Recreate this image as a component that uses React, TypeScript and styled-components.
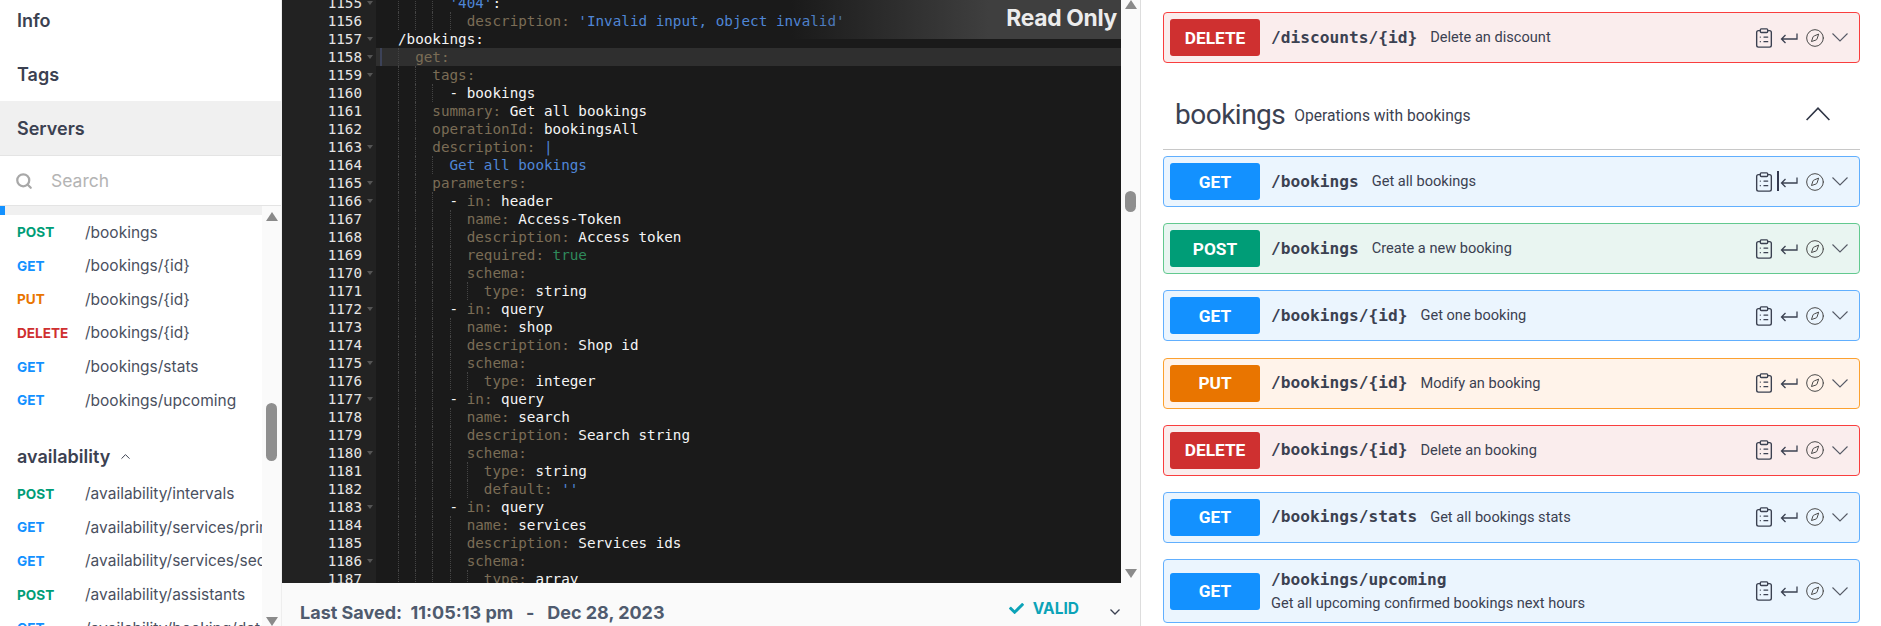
import React from 'react'
import styled, { createGlobalStyle } from 'styled-components'
import { ChevronUp, ClipboardList, Compass, Search } from 'lucide-react'
import { FaCheck } from 'react-icons/fa'

type Method = 'GET' | 'POST' | 'PUT' | 'DELETE'

const methodColors: Record<Method, { main: string; bg: string; border: string }> = {
	GET: { main: '#1391ff', bg: '#ebf5fe', border: '#61affe' },
	POST: { main: '#009d77', bg: '#e9f5f1', border: '#62c98f' },
	PUT: { main: '#e97500', bg: '#fff3ea', border: '#fca130' },
	DELETE: { main: '#cf3030', bg: '#faeded', border: '#f93e3e' },
}

const GlobalStyle = createGlobalStyle`
	html, body {
		margin: 0;
		padding: 0;
		background: #fff;
	}
	* {
		box-sizing: border-box;
	}
`

const Page = styled.div`
	display: flex;
	width: 1881px;
	height: 626px;
	overflow: hidden;
	font-family: Inter, 'Noto Sans', sans-serif;
`

/* sidebar */
const Sidebar = styled.aside`
	display: flex;
	flex-direction: column;
	flex: 0 0 282px;
	height: 626px;
	overflow: hidden;
	border-right: 1px solid #eee;
`

const NavItem = styled.div<{ $active?: boolean; $first?: boolean }>`
	flex: 0 0 54px;
	display: flex;
	align-items: center;
	padding: 1px 0 0 17px;
	margin-top: ${({ $first }) => ($first ? '-7px' : '0')};
	font-size: 18px;
	font-weight: 600;
	color: #3b4151;
	background: ${({ $active }) => ($active ? '#f0f0f0' : '#fff')};
`

const SearchBar = styled.div`
	flex: 0 0 51px;
	display: flex;
	align-items: center;
	gap: 18px;
	padding-left: 15px;
	border-top: 1px solid #e4e4e4;
	border-bottom: 1px solid #e4e4e4;
	font-size: 17.5px;
	color: #b4b4b4;
`

const SidebarBody = styled.div`
	flex: 1;
	display: flex;
	min-height: 0;
`

const NavList = styled.div`
	width: 262px;
	overflow: hidden;
`

const ActiveStrip = styled.div`
	height: 9.4px;
	background: #f0f0f0;
	border-left: 5px solid #1391ff;
`

const EndpointRow = styled.div`
	display: flex;
	align-items: center;
	height: 33.6px;
	padding-left: 17px;
	white-space: nowrap;
`

const MethodTag = styled.span<{ $method: Method }>`
	flex: 0 0 68px;
	font-size: 13.6px;
	font-weight: 700;
	color: ${({ $method }) => methodColors[$method].main};
`

const EndpointPath = styled.span`
	font-size: 15.5px;
	color: #4a5060;
`

const GroupTitle = styled.div`
	display: flex;
	align-items: center;
	gap: 8px;
	height: 40px;
	margin-top: 20px;
	padding-left: 17px;
	font-size: 18px;
	font-weight: 600;
	color: #3b4151;
`

const ScrollTrack = styled.div<{ $top: number; $bottom: number }>`
	flex: 0 0 19px;
	display: flex;
	flex-direction: column;
	align-items: center;
	padding: ${({ $top }) => $top}px 0 ${({ $bottom }) => $bottom}px;
	background: #fafafa;
`

const ScrollArrow = styled.div<{ $down?: boolean }>`
	width: 0;
	height: 0;
	border-left: 6.5px solid transparent;
	border-right: 6.5px solid transparent;
	${({ $down }) =>
		$down ? 'border-top: 9px solid #8a8a8a;' : 'border-bottom: 9px solid #8a8a8a;'}
`

const ScrollThumb = styled.div<{ $top: number; $height: number }>`
	width: 11px;
	height: ${({ $height }) => $height}px;
	margin-top: ${({ $top }) => $top}px;
	margin-bottom: auto;
	border-radius: 6px;
	background: #8f8f8f;
`

/* editor */
const EditorColumn = styled.section`
	flex: 0 0 859px;
	display: flex;
	flex-direction: column;
	border-right: 1px solid #ddd;
`

const EditorBody = styled.div`
	flex: 0 0 583px;
	display: flex;
	min-height: 0;
`

const CodePane = styled.div`
	position: relative;
	flex: 1;
	overflow: hidden;
	background: #1a1a1a;
`

const CodeScroll = styled.div`
	margin-top: -6px;
	font-family: 'DejaVu Sans Mono', 'Liberation Mono', monospace;
	font-size: 14.28px;
	line-height: 18px;
`

const CodeLine = styled.div<{ $active?: boolean }>`
	display: flex;
	height: 18px;
	white-space: pre;
	background: linear-gradient(
		to right,
		#222 94px,
		${({ $active }) => ($active ? '#2f2f2f' : '#1a1a1a')} 94px
	);
`

const Gutter = styled.div`
	flex: 0 0 94px;
	display: flex;
	align-items: center;
	justify-content: flex-end;
	padding-right: 3px;
	color: #e6e6e6;
`

const FoldMark = styled.span<{ $show: boolean }>`
	width: 0;
	height: 0;
	margin-left: 5px;
	border-left: 3.5px solid transparent;
	border-right: 3.5px solid transparent;
	border-top: 4px solid ${({ $show }) => ($show ? '#555' : 'transparent')};
`

const LineMark = styled.span<{ $active?: boolean }>`
	flex: 0 0 22px;
	margin-left: 4px;
	margin-right: -4px;
	border-left: 2px solid ${({ $active }) => ($active ? '#3c4258' : 'transparent')};
`

const IndentGuide = styled.span`
	display: inline-block;
	flex: 0 0 2ch;
	width: 2ch;
	height: 18px;
	border-left: 1px dotted #444;
`

const Token = styled.span<{ $kind: TokenKind }>`
	color: ${({ $kind }) => tokenColors[$kind]};
`

const ReadOnlyBadge = styled.div`
	position: absolute;
	top: 0;
	right: 0;
	width: 330px;
	height: 39px;
	padding: 0 4px 5px 0;
	display: flex;
	align-items: center;
	justify-content: flex-end;
	font-size: 22.8px;
	font-weight: 700;
	color: #ececec;
	letter-spacing: -0.3px;
	background: linear-gradient(to right, rgba(68, 68, 68, 0), #3f3f3f 60%);
`

const StatusBar = styled.footer`
	flex: 1;
	display: flex;
	align-items: center;
	padding: 15px 20px 0 18px;
	background: #fafafa;
	white-space: pre;
`

const SavedText = styled.span`
	font-size: 18px;
	font-weight: 700;
	color: #4f5b6e;
`

const ValidBadge = styled.span`
	display: flex;
	align-items: center;
	gap: 9px;
	margin-left: auto;
	margin-top: -8px;
	font-size: 15.5px;
	font-weight: 700;
	color: #0ca3b8;
`

const StatusChevron = styled.svg`
	width: 10px;
	height: 6px;
	margin-left: 31px;
	fill: none;
	stroke: #3b4151;
	stroke-width: 1.3px;
`

/* operations */
const Operations = styled.main`
	flex: 1;
	height: 626px;
	overflow: hidden;
	padding: 12px 21px 0 22px;
	display: flex;
	flex-direction: column;
`

const OpRow = styled.div<{ $method: Method; $tall?: boolean }>`
	position: relative;
	flex: 0 0 ${({ $tall }) => ($tall ? '64px' : '51px')};
	display: flex;
	align-items: center;
	margin-bottom: 16.17px;
	padding: 0 11px 0 6px;
	border: 1px solid ${({ $method }) => methodColors[$method].border};
	border-radius: 4px;
	background: ${({ $method }) => methodColors[$method].bg};
`

const OpButton = styled.div<{ $method: Method }>`
	flex: 0 0 90px;
	height: 37px;
	display: flex;
	align-items: center;
	justify-content: center;
	border-radius: 3px;
	font-family: Roboto, 'Liberation Sans', sans-serif;
	font-size: 17.3px;
	font-weight: 700;
	color: #fff;
	background: ${({ $method }) => methodColors[$method].main};
`

const OpText = styled.div<{ $stack?: boolean }>`
	display: flex;
	flex-direction: ${({ $stack }) => ($stack ? 'column' : 'row')};
	align-items: ${({ $stack }) => ($stack ? 'flex-start' : 'center')};
	gap: ${({ $stack }) => ($stack ? '6px' : '13px')};
	margin-left: 11px;
	padding-top: ${({ $stack }) => ($stack ? '1px' : '0')};
`

const OpPath = styled.span`
	font-family: 'DejaVu Sans Mono', 'Liberation Mono', monospace;
	font-size: 16.2px;
	font-weight: 700;
	line-height: 18px;
	color: #3b4151;
`

const OpSummary = styled.span`
	font-family: Roboto, 'Liberation Sans', sans-serif;
	font-size: 14.6px;
	line-height: 17px;
	color: #3b4151;
`

const OpIcons = styled.div`
	display: flex;
	align-items: center;
	margin-left: auto;
	color: #3b4151;
`

const ReturnIcon = styled.svg`
	width: 18px;
	height: 12px;
	margin-left: 5px;
	fill: none;
	stroke: currentColor;
	stroke-width: 1.3px;
`

const CompassIcon = styled(Compass)`
	margin-left: 6.5px;
	color: #4a4a4a;
`

const DownIcon = styled.svg`
	width: 16px;
	height: 9px;
	margin-left: 7.5px;
	fill: none;
	stroke: #565a66;
	stroke-width: 1.1px;
`

const TextCaret = styled.span`
	position: absolute;
	top: 14px;
	left: 613px;
	width: 2px;
	height: 20px;
	background: #34394f;
`

const TagHeader = styled.header`
	flex: 0 0 71px;
	display: flex;
	align-items: center;
	margin: 0 0 6px;
	padding: 0 30px 0 12px;
	border-bottom: 1px solid #c8c8c8;
	color: #3b4151;
`

const TagName = styled.h3`
	margin: 0;
	font-family: Roboto, 'Liberation Sans', sans-serif;
	font-size: 28px;
	font-weight: 400;
	letter-spacing: -0.5px;
`

const TagDescription = styled.span`
	margin-left: 9px;
	padding-top: 3px;
	font-family: Roboto, 'Liberation Sans', sans-serif;
	font-size: 15.6px;
`

const TagChevron = styled.svg`
	width: 24px;
	height: 14px;
	margin-left: auto;
	fill: none;
	stroke: #2f3545;
	stroke-width: 1.6px;
`

type TokenKind = 'k' | 'v' | 's' | 'b'

const tokenColors: Record<TokenKind, string> = {
	k: '#7b6d56',
	v: '#f5f5f5',
	s: '#4f86d6',
	b: '#2f8a5c',
}

type CodeRow = { level: number; fold?: boolean; active?: boolean; parts: [TokenKind, string][] }

const kv = (level: number, key: string, value: string, kind: TokenKind = 'v'): CodeRow => ({
	level,
	parts: [
		['k', `${key}: `],
		[kind, value],
	],
})
const block = (level: number, key: string, active = false): CodeRow => ({
	level,
	fold: true,
	active,
	parts: [['k', `${key}:`]],
})
const param = (where: string): CodeRow => ({
	level: 3,
	fold: true,
	parts: [
		['v', '- '],
		['k', 'in: '],
		['v', where],
	],
})

const codeRows: CodeRow[] = [
	{ level: 3, fold: true, parts: [['s', "'404'"], ['v', ':']] },
	kv(4, 'description', "'Invalid input, object invalid'", 's'),
	{ level: 0, fold: true, parts: [['v', '/bookings:']] },
	block(1, 'get', true),
	block(2, 'tags'),
	{ level: 3, parts: [['v', '- bookings']] },
	kv(2, 'summary', 'Get all bookings'),
	kv(2, 'operationId', 'bookingsAll'),
	{ level: 2, fold: true, parts: [['k', 'description: '], ['s', '|']] },
	{ level: 3, parts: [['s', 'Get all bookings']] },
	block(2, 'parameters'),
	param('header'),
	kv(4, 'name', 'Access-Token'),
	kv(4, 'description', 'Access token'),
	kv(4, 'required', 'true', 'b'),
	block(4, 'schema'),
	kv(5, 'type', 'string'),
	param('query'),
	kv(4, 'name', 'shop'),
	kv(4, 'description', 'Shop id'),
	block(4, 'schema'),
	kv(5, 'type', 'integer'),
	param('query'),
	kv(4, 'name', 'search'),
	kv(4, 'description', 'Search string'),
	block(4, 'schema'),
	kv(5, 'type', 'string'),
	kv(5, 'default', "''", 's'),
	param('query'),
	kv(4, 'name', 'services'),
	kv(4, 'description', 'Services ids'),
	block(4, 'schema'),
	kv(5, 'type', 'array'),
]

const bookingEndpoints: [Method, string][] = [
	['POST', '/bookings'],
	['GET', '/bookings/{id}'],
	['PUT', '/bookings/{id}'],
	['DELETE', '/bookings/{id}'],
	['GET', '/bookings/stats'],
	['GET', '/bookings/upcoming'],
]

const availabilityEndpoints: [Method, string][] = [
	['POST', '/availability/intervals'],
	['GET', '/availability/services/primary'],
	['GET', '/availability/services/secondary'],
	['POST', '/availability/assistants'],
	['GET', '/availability/booking/dates'],
]

const operations: { method: Method; path: string; summary: string; caret?: boolean }[] = [
	{ method: 'GET', path: '/bookings', summary: 'Get all bookings', caret: true },
	{ method: 'POST', path: '/bookings', summary: 'Create a new booking' },
	{ method: 'GET', path: '/bookings/{id}', summary: 'Get one booking' },
	{ method: 'PUT', path: '/bookings/{id}', summary: 'Modify an booking' },
	{ method: 'DELETE', path: '/bookings/{id}', summary: 'Delete an booking' },
	{ method: 'GET', path: '/bookings/stats', summary: 'Get all bookings stats' },
]

const RowIcons = () => (
	<OpIcons>
		<ClipboardList size={22} strokeWidth={1.5} />
		<ReturnIcon viewBox="0 0 18 12">
			<path d="M17 1.500v5.500H1.500M5.500 3l-4 4 4 4" />
		</ReturnIcon>
		<CompassIcon size={20} strokeWidth={1.2} />
		<DownIcon viewBox="0 0 16 9">
			<path d="M.5.5 8 8 15.500.5" />
		</DownIcon>
	</OpIcons>
)

const EndpointList = ({ items }: { items: [Method, string][] }) => (
	<>
		{items.map(([method, path], i) => (
			<EndpointRow key={i}>
				<MethodTag $method={method}>{method}</MethodTag>
				<EndpointPath>{path}</EndpointPath>
			</EndpointRow>
		))}
	</>
)

const App = () => (
	<Page>
		<GlobalStyle />
		<Sidebar>
			<NavItem $first>Info</NavItem>
			<NavItem>Tags</NavItem>
			<NavItem $active>Servers</NavItem>
			<SearchBar>
				<Search size={18} strokeWidth={3} color="#a8a8a8" />
				Search
			</SearchBar>
			<SidebarBody>
				<NavList>
					<ActiveStrip />
					<EndpointList items={bookingEndpoints} />
					<GroupTitle>
						availability
						<ChevronUp size={15} strokeWidth={1.6} />
					</GroupTitle>
					<EndpointList items={availabilityEndpoints} />
				</NavList>
				<ScrollTrack $top={6} $bottom={0}>
					<ScrollArrow />
					<ScrollThumb $top={182} $height={58} />
					<ScrollArrow $down />
				</ScrollTrack>
			</SidebarBody>
		</Sidebar>

		<EditorColumn>
			<EditorBody>
				<CodePane>
					<CodeScroll>
						{codeRows.map((row, i) => (
							<CodeLine key={i} $active={row.active}>
								<Gutter>
									{1155 + i}
									<FoldMark $show={!!row.fold} />
								</Gutter>
								<LineMark $active={row.active} />
								{Array.from({ length: row.level }).map((_, g) => (
									<IndentGuide key={g} />
								))}
								{row.parts.map(([kind, text], p) => (
									<Token key={p} $kind={kind}>
										{text}
									</Token>
								))}
							</CodeLine>
						))}
					</CodeScroll>
					<ReadOnlyBadge>Read Only</ReadOnlyBadge>
				</CodePane>
				<ScrollTrack $top={0} $bottom={5}>
					<ScrollArrow />
					<ScrollThumb $top={182} $height={21} />
					<ScrollArrow $down />
				</ScrollTrack>
			</EditorBody>
			<StatusBar>
				<SavedText>Last Saved:  11:05:13 pm   -   Dec 28, 2023</SavedText>
				<ValidBadge>
					<FaCheck size={15} />
					VALID
				</ValidBadge>
				<StatusChevron viewBox="0 0 10 6">
					<path d="M.5.5 5 5 9.500.5" />
				</StatusChevron>
			</StatusBar>
		</EditorColumn>

		<Operations>
			<OpRow $method="DELETE">
				<OpButton $method="DELETE">DELETE</OpButton>
				<OpText>
					<OpPath>/discounts/{'{id}'}</OpPath>
					<OpSummary>Delete an discount</OpSummary>
				</OpText>
				<RowIcons />
			</OpRow>

			<TagHeader>
				<TagName>bookings</TagName>
				<TagDescription>Operations with bookings</TagDescription>
				<TagChevron viewBox="0 0 24 14">
					<path d="M.6 13 12 1.200 23.400 13" />
				</TagChevron>
			</TagHeader>

			{operations.map((op, i) => (
				<OpRow key={i} $method={op.method}>
					<OpButton $method={op.method}>{op.method}</OpButton>
					<OpText>
						<OpPath>{op.path}</OpPath>
						<OpSummary>{op.summary}</OpSummary>
					</OpText>
					<RowIcons />
					{op.caret && <TextCaret />}
				</OpRow>
			))}

			<OpRow $method="GET" $tall>
				<OpButton $method="GET">GET</OpButton>
				<OpText $stack>
					<OpPath>/bookings/upcoming</OpPath>
					<OpSummary>Get all upcoming confirmed bookings next hours</OpSummary>
				</OpText>
				<RowIcons />
			</OpRow>
		</Operations>
	</Page>
)

export default App
